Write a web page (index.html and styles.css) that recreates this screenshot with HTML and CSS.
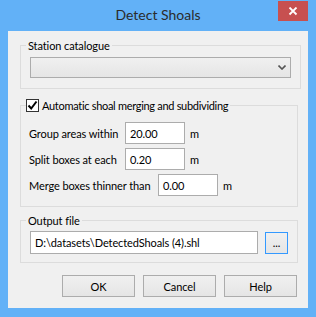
FILE: index.html
```html
<!DOCTYPE html>
<html>
<head>
<meta charset="utf-8">
<link rel="stylesheet" href="styles.css">
</head>
<body>
<div class="window">
  <div class="titlebar">
    <span class="tb-spacer"></span>
    <span class="title">Detect Shoals</span>
    <button class="close" aria-label="Close">
      <svg width="10" height="9" viewBox="0 0 10 9"><path d="M1.5 0.5 L8.5 7.5 M8.5 0.5 L1.5 7.5" stroke="#fff" stroke-width="1.8" fill="none"/></svg>
    </button>
  </div>
  <div class="client">
    <fieldset class="group group-station">
      <legend class="legend">Station catalogue</legend>
      <div class="combo">
        <svg class="chevron" width="8" height="5" viewBox="0 0 8 5"><path d="M0.5 0.5 L4 4 L7.5 0.5" stroke="#555" stroke-width="1.6" fill="none"/></svg>
      </div>
    </fieldset>

    <fieldset class="group group-merge">
      <legend class="legend legend-check">
        <span class="checkbox"><svg width="11" height="11" viewBox="0 0 11 11"><path d="M1.5 5.5 L4.2 8.5 L9.5 1.5" stroke="#000" stroke-width="2" fill="none"/></svg></span><span class="legend-text">Automatic shoal merging and subdividing</span>
      </legend>
      <div class="rows">
        <div class="row"><span class="lbl lbl-short">Group areas within</span><span class="field num">20.00</span><span class="unit">m</span></div>
        <div class="row"><span class="lbl lbl-short">Split boxes at each</span><span class="field num">0.20</span><span class="unit">m</span></div>
        <div class="row"><span class="lbl lbl-long">Merge boxes thinner than</span><span class="field num">0.00</span><span class="unit">m</span></div>
      </div>
    </fieldset>

    <fieldset class="group group-output">
      <legend class="legend">Output file</legend>
      <div class="file-row">
        <span class="field path">D:\datasets\DetectedShoals (4).shl</span>
        <button class="btn browse">...</button>
      </div>
    </fieldset>

    <div class="buttons">
      <button class="btn action">OK</button>
      <button class="btn action">Cancel</button>
      <button class="btn action">Help</button>
    </div>
  </div>
</div>
</body>
</html>
```

FILE: styles.css
```css
html, body {
  margin: 0;
  padding: 0;
}
body {
  width: 316px;
  height: 317px;
  overflow: hidden;
  font-family: Lato, "Noto Sans", sans-serif;
  font-size: 11px;
  letter-spacing: -0.1px;
  color: #000;
}
.window {
  width: 316px;
  height: 317px;
  background: #62b1f7;
  display: flex;
  flex-direction: column;
}
.titlebar {
  height: 31px;
  display: grid;
  grid-template-columns: 1fr auto 1fr;
  align-items: start;
}
.title {
  font-size: 14px;
  letter-spacing: 0;
  line-height: 30px;
  color: #2b2b2b;
  white-space: nowrap;
}
.close {
  justify-self: end;
  margin: 1px 8px 0 0;
  width: 30px;
  height: 20px;
  padding: 0;
  border: 0;
  background: #c75050;
  display: flex;
  align-items: center;
  justify-content: center;
}
.client {
  margin: 0 8px;
  width: 300px;
  height: 277px;
  box-sizing: border-box;
  background: #f0f0f0;
  padding: 6px 0 0 12px;
  display: flex;
  flex-direction: column;
}
.group {
  margin: 0;
  padding: 0 0 10px 0;
  border: 1px solid #dcdcdc;
  min-width: 0;
  box-sizing: border-box;
}
.legend {
  margin-left: 5px;
  padding: 0 2px;
  height: 17px;
  line-height: 17px;
  white-space: nowrap;
}
.group-station {
  width: 281px;
}
.combo {
  margin: 3px 9px 0 9px;
  height: 21px;
  box-sizing: border-box;
  border: 1px solid #acacac;
  background: linear-gradient(#f0f0f0, #e5e5e5);
  display: flex;
  align-items: center;
  justify-content: flex-end;
  padding-right: 4px;
}
.group-merge {
  width: 278px;
  margin-top: 8px;
}
.legend-check {
  padding: 0 2px 0 0;
  display: flex;
  align-items: center;
}
.legend-text {
  letter-spacing: -0.3px;
}
.checkbox {
  width: 13px;
  height: 13px;
  box-sizing: border-box;
  border: 1px solid #333;
  background: #fff;
  margin-right: 3px;
  display: flex;
  align-items: center;
  justify-content: center;
}
.rows {
  margin-top: 8px;
  padding-left: 8px;
  display: flex;
  flex-direction: column;
  gap: 4px;
}
.row {
  height: 22px;
  display: flex;
  align-items: center;
}
.lbl {
  white-space: nowrap;
}
.lbl-short {
  width: 96px;
}
.lbl-long {
  width: 129px;
}
.field {
  box-sizing: border-box;
  border: 1px solid #acacac;
  background: #fff;
  display: flex;
  align-items: center;
  white-space: nowrap;
  overflow: hidden;
}
.num {
  width: 60px;
  height: 22px;
  padding-left: 4px;
}
.unit {
  margin-left: 5px;
}
.group-output {
  width: 278px;
  margin-top: 5px;
  padding-bottom: 8px;
}
.file-row {
  margin: 2px 0 0 9px;
  display: flex;
  align-items: flex-start;
}
.path {
  width: 228px;
  height: 23px;
  padding-left: 4px;
}
.btn {
  font-family: inherit;
  font-size: inherit;
  letter-spacing: inherit;
  color: #000;
  box-sizing: border-box;
  border: 1px solid #acacac;
  background: linear-gradient(#f0f0f0, #e5e5e5);
  padding: 0;
  margin: 0;
}
.browse {
  margin: 1px 0 0 7px;
  width: 23px;
  height: 22px;
  border-color: #3399ff;
  line-height: 18px;
}
.buttons {
  margin-top: 12px;
  padding-right: 11px;
  display: flex;
  justify-content: flex-end;
  gap: 8px;
}
.action {
  width: 73px;
  height: 22px;
}
```
